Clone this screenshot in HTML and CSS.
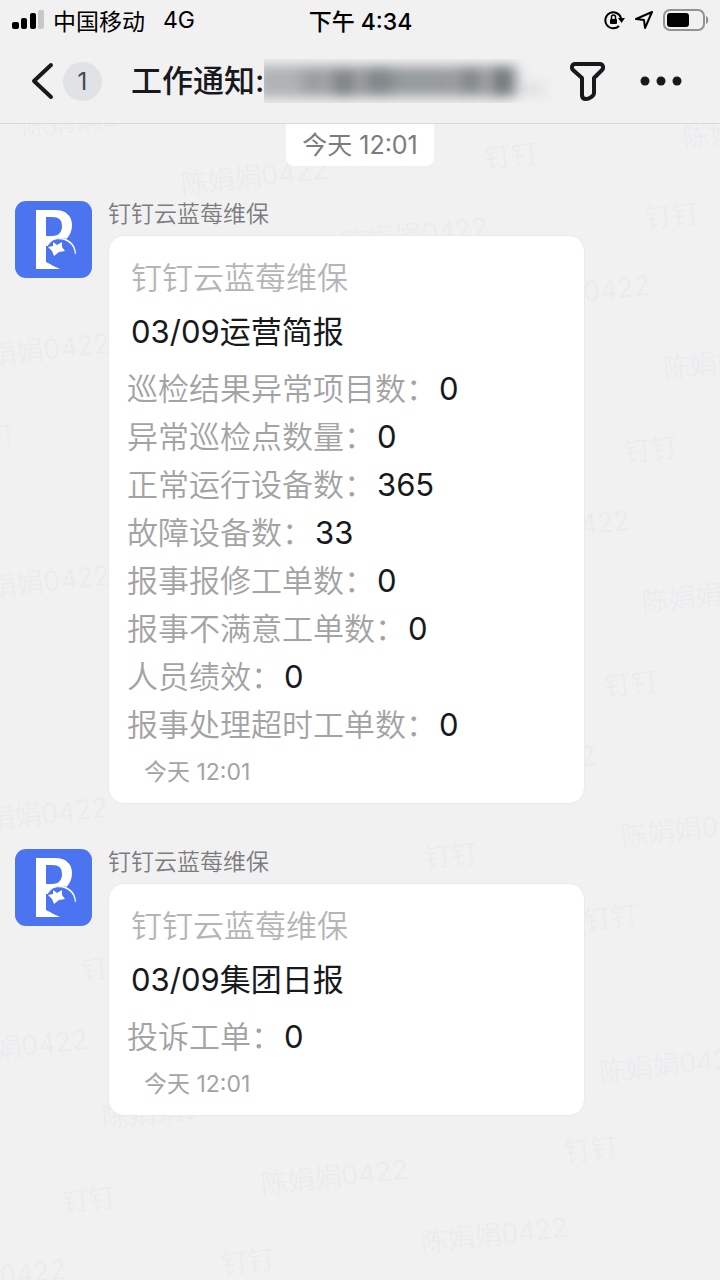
FILE: index.html
```html
<!DOCTYPE html>
<html lang="zh-CN">
<head>
  <meta charset="utf-8">
  <meta name="viewport" content="width=device-width, initial-scale=1">
  <title>工作通知</title>
  <link rel="stylesheet" href="styles.css">
</head>
<body>
  <svg width="0" height="0" class="defs" aria-hidden="true">
    <symbol id="logo" viewBox="0 0 77 77">
      <rect width="77" height="77" rx="11" fill="#4c74f0"/>
      <path fill="#fff" fill-rule="evenodd" d="M21 9h19c11 0 17 6 17 15 0 7-3 12-7 15v6H31v16l14 7H21zM31 16v19h6c7 0 10-4 10-10 0-6-3-9-10-9z"/>
      <circle cx="46" cy="52" r="15" fill="#4c74f0"/>
      <path fill="#fff" d="M36 40c10-7 25-1 25 13l-1 0C59 41 47 35 36 40z"/>
      <path fill="#fff" d="M38 41l4 3 5-3 0 5 3 4-6 1-5 4-2-5-4-4 5-1z"/>
    </symbol>
  </svg>

  <header class="top">
    <div class="status">
      <div class="carrier">
        <svg width="33" height="20" viewBox="0 0 33 20">
          <rect x="0" y="12" width="7" height="7" rx="2"/>
          <rect x="9" y="8" width="6" height="11" rx="2"/>
          <rect x="18" y="3" width="6" height="16" rx="2"/>
          <rect x="26" y="0" width="6" height="19" rx="2" fill="#c8c8c9"/>
        </svg>
        <span>中国移动</span>
        <span class="network">4G</span>
      </div>
      <div class="clock">下午 4:34</div>
      <div class="indicators">
        <svg width="21" height="20" viewBox="0 0 21 20" fill="none" stroke="#000" stroke-width="2">
          <path d="M17 8A8 8 0 1 0 15 16"/>
          <path d="M14 8h7l-3.500 5z" fill="#000" stroke="none"/>
          <rect x="6" y="9" width="7" height="5" rx="1" fill="#000" stroke="none"/>
          <path d="M7.500 9V7a2 2 0 0 1 4 0v2" stroke-width="1.500"/>
        </svg>
        <svg width="18" height="18" viewBox="0 0 18 18" fill="none" stroke="#000" stroke-width="2" stroke-linejoin="round">
          <path d="M17 1L1 8l8 1 1 8z"/>
        </svg>
        <svg width="46" height="22" viewBox="0 0 46 22">
          <rect x="1" y="1" width="40" height="20" rx="6" fill="none" stroke="#929293" stroke-width="2"/>
          <rect x="4" y="4" width="22" height="14" rx="3"/>
          <path d="M43 7c3 1 3 7 0 8z" fill="#929293"/>
        </svg>
      </div>
    </div>
    <nav class="titlebar">
      <button class="icon-btn" aria-label="返回">
        <svg width="24" height="38" viewBox="0 0 24 38" fill="none" stroke="#17191c" stroke-width="4" stroke-linecap="round" stroke-linejoin="round">
          <path d="M20 3L3 19l17 16"/>
        </svg>
      </button>
      <span class="unread">1</span>
      <h1 class="title">工作通知:</h1>
      <svg class="masked" height="44" viewBox="0 0 290 44" preserveAspectRatio="none" aria-hidden="true">
        <defs><filter id="soft" x="-10%" y="-50%" width="120%" height="200%"><feGaussianBlur stdDeviation="7 6"/></filter></defs>
        <g filter="url(#soft)" fill="#6f7577">
          <rect x="-8" y="6" width="258" height="33" opacity=".5"/>
          <rect x="38" y="10" width="24" height="24" opacity=".35"/>
          <rect x="68" y="10" width="24" height="26" opacity=".75"/>
          <rect x="100" y="9" width="28" height="26" opacity=".7"/>
          <rect x="128" y="11" width="64" height="22" opacity=".4"/>
          <rect x="196" y="9" width="22" height="25" opacity=".7"/>
          <rect x="228" y="8" width="24" height="28" opacity=".9"/>
          <rect x="258" y="24" width="22" height="12" opacity=".15"/>
        </g>
      </svg>
      <button class="icon-btn" aria-label="筛选">
        <svg width="36" height="40" viewBox="0 0 36 40" fill="none" stroke="#17191c" stroke-width="4" stroke-linejoin="round">
          <path d="M5 3h25c3 0 4 4 2 6l-8 8v15c0 3-5 6-8 6-2 0-4-1-4-4V17L3 9C1 7 2 3 5 3z"/>
        </svg>
      </button>
      <button class="icon-btn more" aria-label="更多">
        <svg width="42" height="10" viewBox="0 0 42 10" fill="#17191c">
          <circle cx="5" cy="5" r="4.500"/><circle cx="21" cy="5" r="4.500"/><circle cx="37" cy="5" r="4.500"/>
        </svg>
      </button>
    </nav>
  </header>

  <main class="chat">
    <svg class="watermark" aria-hidden="true">
      <g id="marks"></g>
    </svg>

    <time class="day">今天 12:01</time>

    <article class="message">
      <svg class="avatar"><use href="#logo"/></svg>
      <div class="body">
        <div class="sender">钉钉云蓝莓维保</div>
        <section class="card">
          <div class="app">钉钉云蓝莓维保</div>
          <h2>03/09运营简报</h2>
          <dl>
            <div><dt>巡检结果异常项目数：</dt><dd>0</dd></div>
            <div><dt>异常巡检点数量：</dt><dd>0</dd></div>
            <div><dt>正常运行设备数：</dt><dd>365</dd></div>
            <div><dt>故障设备数：</dt><dd>33</dd></div>
            <div><dt>报事报修工单数：</dt><dd>0</dd></div>
            <div><dt>报事不满意工单数：</dt><dd>0</dd></div>
            <div><dt>人员绩效：</dt><dd>0</dd></div>
            <div><dt>报事处理超时工单数：</dt><dd>0</dd></div>
          </dl>
          <time class="sent">今天 12:01</time>
        </section>
      </div>
    </article>

    <article class="message">
      <svg class="avatar"><use href="#logo"/></svg>
      <div class="body">
        <div class="sender">钉钉云蓝莓维保</div>
        <section class="card">
          <div class="app">钉钉云蓝莓维保</div>
          <h2>03/09集团日报</h2>
          <dl>
            <div><dt>投诉工单：</dt><dd>0</dd></div>
          </dl>
          <time class="sent">今天 12:01</time>
        </section>
      </div>
    </article>
  </main>

  <script src="watermark.js"></script>
</body>
</html>
```
FILE: styles.css
```css
* {
  box-sizing: border-box;
}

body {
  margin: 0;
  min-height: 100vh;
  display: flex;
  flex-direction: column;
  background: #f1f1f2;
  color: #17191c;
  font-family: Inter, "Noto Sans CJK SC", sans-serif;
}

h1, h2, dl, dd {
  margin: 0;
  font-weight: 400;
}

svg {
  display: block;
  flex: none;
}

.defs {
  position: absolute;
}

/* status bar and title */
.top {
  height: 124px;
  border-bottom: 1px solid #d9d9da;
}

.status {
  display: grid;
  grid-template-columns: 1fr auto 1fr;
  align-items: center;
  height: 39px;
  padding: 0 11px 0 12px;
  font-size: 23px;
  color: #000;
}

.carrier,
.indicators {
  display: flex;
  align-items: center;
  gap: 8px;
}

.network {
  margin-left: 10px;
}

.clock {
  font-weight: 500;
}

.indicators {
  justify-content: flex-end;
  gap: 10px;
}

.titlebar {
  display: flex;
  align-items: center;
  height: 84px;
  padding: 0 38px 0 31px;
}

.icon-btn {
  padding: 0;
  border: 0;
  background: none;
}

.more {
  margin-left: 34px;
}

.unread {
  width: 39px;
  margin-left: 8px;
  border-radius: 20px;
  background: #e0e2e6;
  color: #45484d;
  font-size: 24px;
  line-height: 39px;
  text-align: center;
}

.title {
  margin-left: 29px;
  font-size: 31px;
  font-weight: 500;
  line-height: 40px;
  white-space: nowrap;
}

.masked {
  flex: 1;
  min-width: 0;
  margin-right: 16px;
}

/* conversation */
.chat {
  position: relative;
  flex: 1;
  overflow: hidden;
}

.watermark {
  position: absolute;
  z-index: -1;
  width: 100%;
  height: 100%;
  font-size: 27px;
  font-weight: 300;
  fill: #eaebed;
}

.day {
  display: block;
  width: fit-content;
  margin: 0 auto 35px;
  padding: 0 16px;
  border-radius: 0 0 8px 8px;
  background: #fff;
  color: #7b7c7e;
  font-size: 25px;
  line-height: 42px;
}

.message {
  display: flex;
  align-items: flex-start;
  gap: 16px;
  margin-bottom: 45px;
  padding: 0 135px 0 15px;
}

.avatar {
  width: 77px;
  height: 77px;
}

.body {
  flex: 1;
}

.sender {
  color: #7b7c7e;
  font-size: 23px;
  font-weight: 350;
  line-height: 27px;
}

.card {
  margin-top: 7px;
  padding: 22px 18px 16px;
  border: 1px solid #eaeaeb;
  border-radius: 16px;
  background: #fff;
}

.app,
.card h2 {
  margin-left: 4px;
  font-size: 31px;
  line-height: 40px;
}

.app {
  color: #b5b5b6;
  font-weight: 350;
}

.card h2 {
  margin-top: 14px;
}

.card dl {
  margin-top: 13px;
  font-size: 31px;
  line-height: 48px;
}

.card dl div {
  display: flex;
  gap: 2px;
}

.card dt {
  color: #a3a3a4;
  font-weight: 350;
}

.sent {
  display: block;
  margin-top: 8px;
  margin-left: 17px;
  color: #a3a3a4;
  font-size: 23px;
  line-height: 30px;
}
```
FILE: watermark.js
```javascript
const names = [
  [22, 12], [182, 70], [684, 24], [342, 128], [504, 186], [-36, 244], [664, 254],
  [484, 421], [-36, 476], [643, 488], [450, 656], [-38, 708], [622, 722],
  [103, 1004], [-58, 940], [600, 958], [262, 1070], [422, 1128], [-80, 1170]
];
const brands = [
  [485, 44], [646, 104], [-38, 326], [625, 338], [605, 572], [425, 744],
  [585, 806], [82, 856], [565, 1038], [63, 1088], [222, 1150]
];

function drawMarks(points, label) {
  const group = document.getElementById('marks');
  points.forEach(([x, y]) => {
    const text = document.createElementNS('http://www.w3.org/2000/svg', 'text');
    text.setAttribute('transform', `translate(${x} ${y}) rotate(-6)`);
    text.textContent = label;
    group.appendChild(text);
  });
}

drawMarks(names, '陈娟娟0422');
drawMarks(brands, '钉钉');
```
